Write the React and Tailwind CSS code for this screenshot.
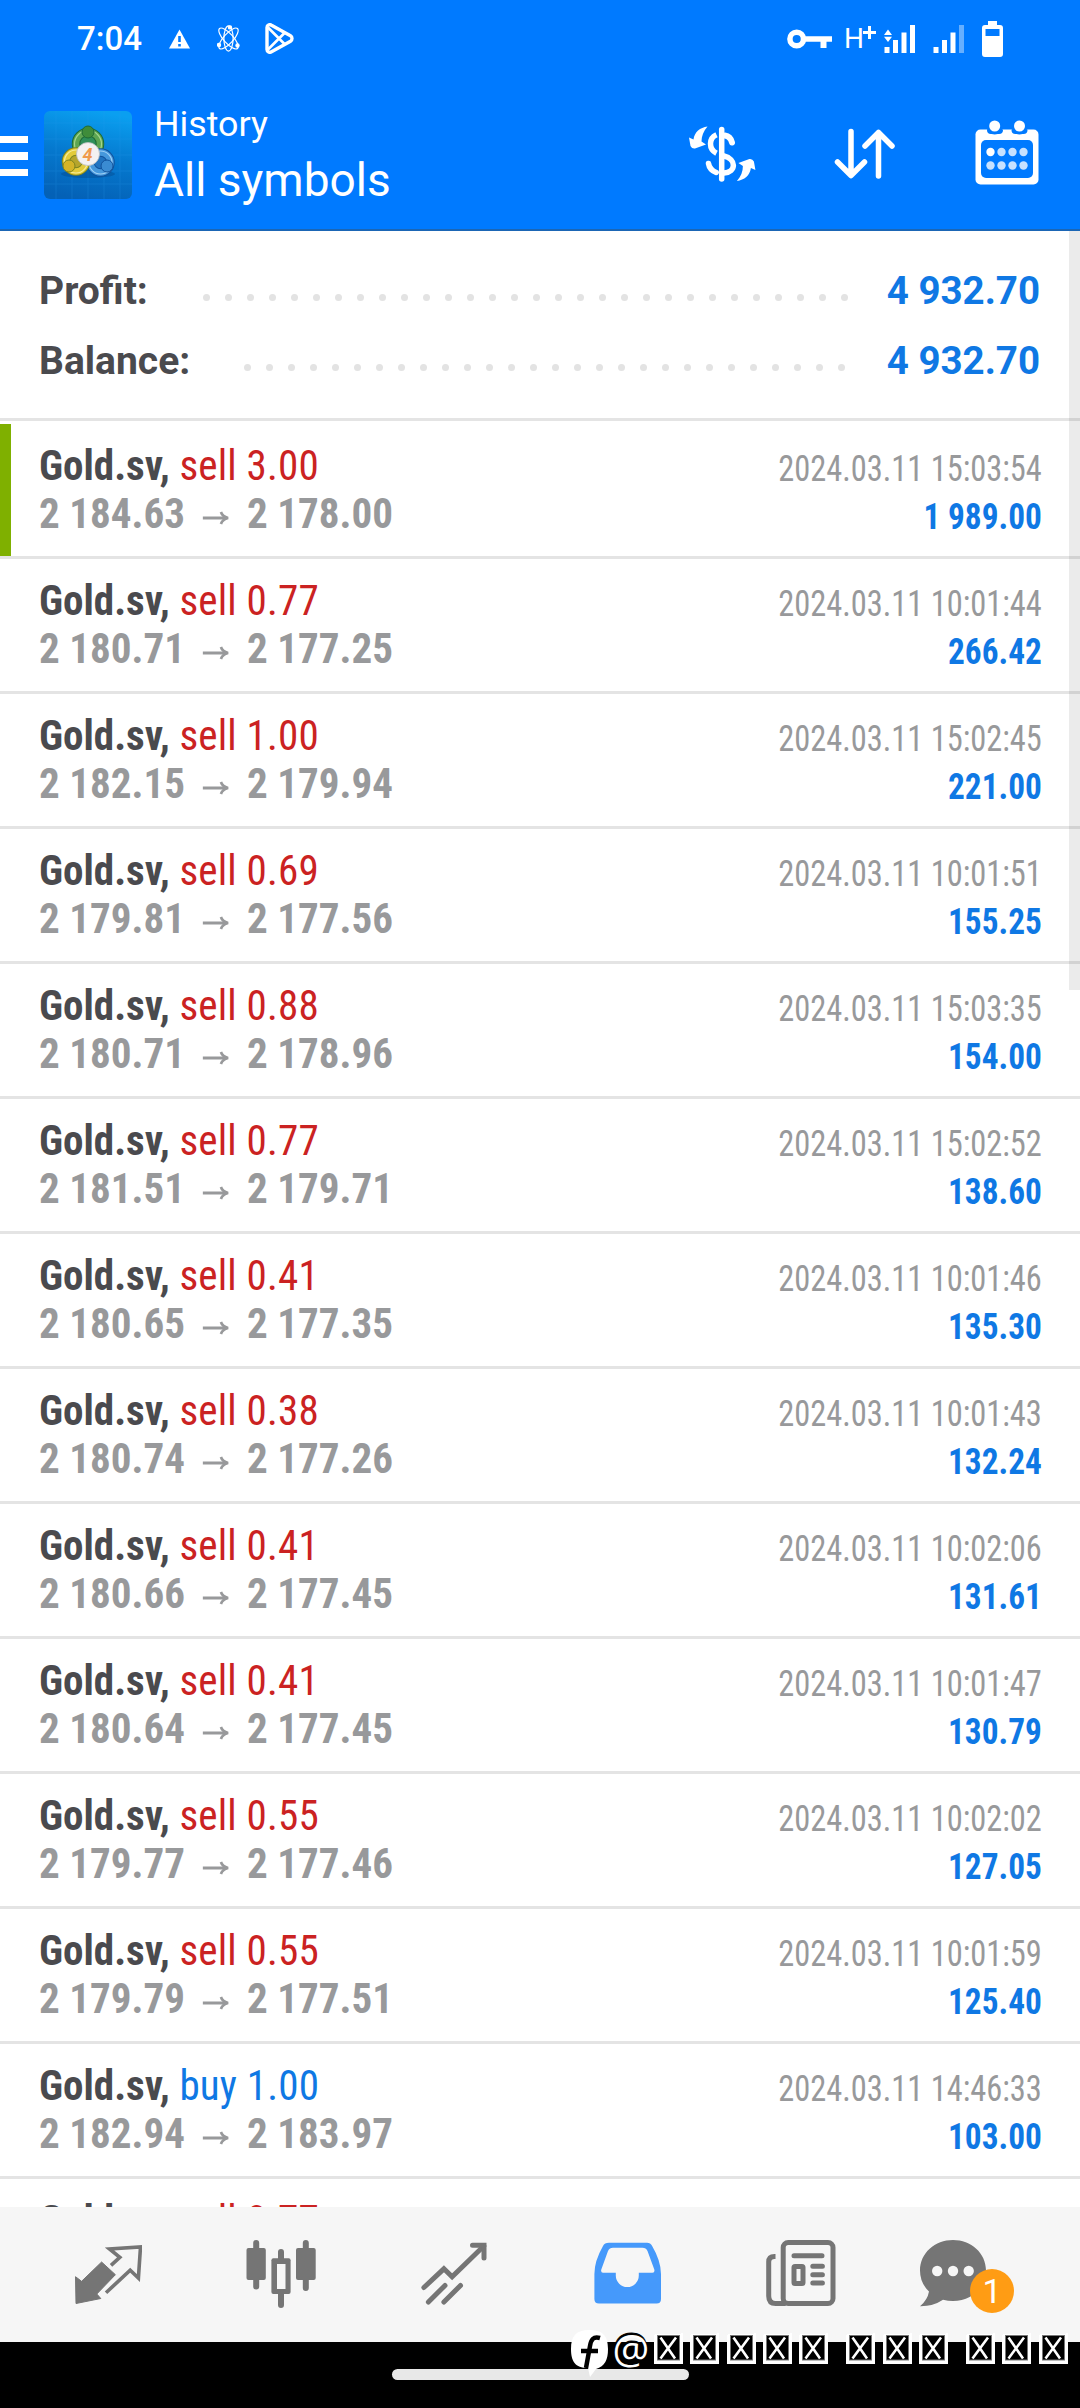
const deals = [
  { side: "sell", volume: "3.00", open: "2 184.63", close: "2 178.00", time: "2024.03.11 15:03:54", profit: "1 989.00", marked: true },
  { side: "sell", volume: "0.77", open: "2 180.71", close: "2 177.25", time: "2024.03.11 10:01:44", profit: "266.42" },
  { side: "sell", volume: "1.00", open: "2 182.15", close: "2 179.94", time: "2024.03.11 15:02:45", profit: "221.00" },
  { side: "sell", volume: "0.69", open: "2 179.81", close: "2 177.56", time: "2024.03.11 10:01:51", profit: "155.25" },
  { side: "sell", volume: "0.88", open: "2 180.71", close: "2 178.96", time: "2024.03.11 15:03:35", profit: "154.00" },
  { side: "sell", volume: "0.77", open: "2 181.51", close: "2 179.71", time: "2024.03.11 15:02:52", profit: "138.60" },
  { side: "sell", volume: "0.41", open: "2 180.65", close: "2 177.35", time: "2024.03.11 10:01:46", profit: "135.30" },
  { side: "sell", volume: "0.38", open: "2 180.74", close: "2 177.26", time: "2024.03.11 10:01:43", profit: "132.24" },
  { side: "sell", volume: "0.41", open: "2 180.66", close: "2 177.45", time: "2024.03.11 10:02:06", profit: "131.61" },
  { side: "sell", volume: "0.41", open: "2 180.64", close: "2 177.45", time: "2024.03.11 10:01:47", profit: "130.79" },
  { side: "sell", volume: "0.55", open: "2 179.77", close: "2 177.46", time: "2024.03.11 10:02:02", profit: "127.05" },
  { side: "sell", volume: "0.55", open: "2 179.79", close: "2 177.51", time: "2024.03.11 10:01:59", profit: "125.40" },
  { side: "buy", volume: "1.00", open: "2 182.94", close: "2 183.97", time: "2024.03.11 14:46:33", profit: "103.00" },
];

const StatusBar = () => (
  <div className="flex h-[77px] items-center justify-between pl-[77px] pr-[77px]">
    <div className="flex items-center">
      <span className="w-[92px] text-[33px] font-medium leading-[77px]">7:04</span>
      <svg className="mr-[27px]" width="21" height="20" viewBox="0 0 21 20">
        <path d="M10.5 0.5 21 19.5H0Z" fill="#fff" />
        <path d="M10.5 7v6M10.5 15v2.5" stroke="#007aff" strokeWidth="2.6" />
      </svg>
      <svg className="mr-[25px]" width="23" height="27" viewBox="0 0 23 27" fill="none" stroke="#fff" strokeWidth="1.2">
        <ellipse cx="11.5" cy="13.5" rx="4.6" ry="12.6" />
        <ellipse cx="11.5" cy="13.5" rx="4.8" ry="13.4" transform="rotate(42 11.5 13.5)" />
        <ellipse cx="11.5" cy="13.5" rx="4.8" ry="13.4" transform="rotate(-42 11.5 13.5)" />
        <circle cx="13" cy="2.4" r="1.6" fill="#fff" />
        <circle cx="2" cy="20" r="1.6" fill="#fff" />
        <circle cx="20.5" cy="20.5" r="1.6" fill="#fff" />
      </svg>
      <svg width="29" height="31" viewBox="0 0 29 31" fill="none" stroke="#fff" strokeLinejoin="round">
        <path d="M2 4.5C2 2 4.5 1 6.5 2.2L25.5 12.8c2 1.2 2 4.2 0 5.4L6.5 28.8C4.5 30 2 29 2 26.5Z" strokeWidth="3.4" />
        <path d="M3 4.5 19.5 21M3 26.5 19.5 10" strokeWidth="2.6" />
      </svg>
    </div>
    <div className="flex items-center">
      <svg className="mr-[12px]" width="45" height="20" viewBox="0 0 45 20">
        <circle cx="9.7" cy="10" r="6.8" fill="none" stroke="#fff" strokeWidth="5.5" />
        <path d="M18 7.2h27v5.6h-5.5V19h-6v-6.2H18Z" fill="#fff" />
      </svg>
      <span className="flex w-[40px] items-start text-[28px] leading-[34px]">
        H
        <svg className="mt-[4px] -ml-px" width="13" height="13" viewBox="0 0 13 13" stroke="#fff" strokeWidth="3">
          <path d="M6.5 0v13M0 6.5h13" />
        </svg>
      </span>
      <svg className="mr-[18px]" width="31" height="30" viewBox="0 0 31 30" fill="#fff">
        <path d="M4 5.5 8 11H0ZM4 18 8 12.8H0Z" />
        <path d="M0.5 23h5v6h-5ZM9 16h5v13H9ZM17.5 8.5h5V29h-5ZM26 1h5v28h-5Z" />
      </svg>
      <svg className="mr-[18px]" width="31" height="30" viewBox="0 0 31 30" fill="#fff">
        <path d="M0.5 23h5v6h-5ZM9 16h5v13H9ZM17.5 8.5h5V29h-5Z" />
        <path d="M26 1h5v28h-5Z" opacity="0.4" />
      </svg>
      <svg width="21" height="36" viewBox="0 0 21 36">
        <path d="M6 0h9v4h3a3 3 0 0 1 3 3v26a3 3 0 0 1-3 3H3a3 3 0 0 1-3-3V7a3 3 0 0 1 3-3h3Z" fill="#fff" />
        <path d="M3.5 8h14v7h-14Z" fill="#007aff" />
      </svg>
    </div>
  </div>
);

const AppLogo = () => (
  <svg className="ml-[16px] mt-[34px]" width="88" height="88" viewBox="0 0 88 88">
    <defs>
      <linearGradient id="logoBg" x1="0.6" y1="0" x2="0.4" y2="1">
        <stop offset="0" stopColor="#0a9ff0" />
        <stop offset="0.5" stopColor="#0579cf" />
        <stop offset="1" stopColor="#0461b6" />
      </linearGradient>
    </defs>
    <rect width="88" height="88" rx="6" fill="url(#logoBg)" />
    <path d="M12 0v88M28 0v88M44 0v88M60 0v88M76 0v88M0 12h88M0 28h88M0 44h88M0 60h88M0 73h88" stroke="#2b9df0" strokeWidth="1" opacity="0.22" />
    <ellipse cx="44" cy="63" rx="27" ry="4" fill="#034d93" opacity="0.5" />
    <circle cx="44" cy="33" r="12" fill="#2f8f5a" stroke="#1e6a35" strokeWidth="8.5" />
    <circle cx="44" cy="33" r="12" fill="none" stroke="#5da552" strokeWidth="6.5" />
    <circle cx="44" cy="33" r="13.5" fill="none" stroke="#a5d68c" strokeWidth="1.2" />
    <circle cx="56.5" cy="51.5" r="10" fill="#2173c0" stroke="#11529c" strokeWidth="8.5" />
    <circle cx="56.5" cy="51.5" r="10" fill="none" stroke="#4698dc" strokeWidth="6.5" />
    <circle cx="56.5" cy="51.5" r="11.5" fill="none" stroke="#9fd0f5" strokeWidth="1.2" />
    <circle cx="32" cy="50.5" r="10" fill="#b5a52c" stroke="#7d8420" strokeWidth="8.5" />
    <circle cx="32" cy="50.5" r="10" fill="none" stroke="#e3cb3a" strokeWidth="6.5" />
    <circle cx="32" cy="50.5" r="11.5" fill="none" stroke="#f7ec9a" strokeWidth="1.2" />
    <circle cx="44" cy="21" r="6" fill="#3f8c3a" stroke="#1e6a35" strokeWidth="1" />
    <circle cx="25" cy="55" r="6" fill="#d3b428" stroke="#7d8420" strokeWidth="1" />
    <circle cx="63" cy="55" r="6" fill="#3a8bd2" stroke="#11529c" strokeWidth="1" />
    <circle cx="44" cy="43" r="11.5" fill="#f4f1f1" stroke="#b9bdc0" strokeWidth="0.8" />
    <text x="43.5" y="49.5" textAnchor="middle" fontSize="18" fontWeight="700" fontStyle="italic" fill="#f09a4c">4</text>
  </svg>
);

const Header = () => (
  <header className="h-[231px] border-b-2 border-[#1b66b5] bg-[#007aff] font-[Roboto] text-white">
    <StatusBar />
    <div className="flex items-start">
      <div className="mt-[59px] flex w-[28px] flex-col gap-[9px]">
        <div className="h-[7px] bg-white" />
        <div className="h-[8px] bg-white" />
        <div className="h-[7px] bg-white" />
      </div>
      <AppLogo />
      <div className="ml-[22px] mt-[26px] flex-1">
        <div className="text-[35.8px] leading-[42px]">History</div>
        <div className="mt-[3px] text-[46px] leading-[64px]">All symbols</div>
      </div>
      <svg className="mt-[33px]" width="90" height="80" viewBox="0 0 90 80" fill="none" stroke="#fff" strokeWidth="5.5" strokeLinecap="round">
        <path d="M41.7 19.5v49.5" />
        <path d="M45 25.5c4 .5 6 3.2 7 7" strokeWidth="6" />
        <path d="M36.5 24.8c-8 3.5-8 14.5 0 18.5" strokeLinecap="butt" />
        <path d="M44 46c12.5 3 12.5 16 0 17" />
        <path d="M28.5 53.5c.8 5 4 7.5 7.7 9" />
        <g fill="#fff" stroke="none">
          <path d="M27.5 16.5C20 17.5 14.5 22 13.5 29.5L9 27.5 10.5 36Q12 39 15 38.5L26 34.5 21.5 31.5C21.5 26 23.5 21 27.5 16.5Z" />
          <path d="M27.5 16.5C20 17.5 14.5 22 13.5 29.5L9 27.5 10.5 36Q12 39 15 38.5L26 34.5 21.5 31.5C21.5 26 23.5 21 27.5 16.5Z" transform="rotate(180 42.2 43.8)" />
        </g>
      </svg>
      <svg className="ml-[64px] mt-[51px]" width="62" height="52" viewBox="0 0 62 52" fill="none" stroke="#fff" strokeWidth="5.5" strokeLinecap="round" strokeLinejoin="round">
        <path d="M17 3.5V47M3.5 34 17 47.5 30.5 34" />
        <path d="M44.5 48V4.5M31 18 44.5 4.5 58 18" />
      </svg>
      <svg className="ml-[79px] mr-[41px] mt-[43px]" width="64" height="65" viewBox="0 0 64 65">
        <rect x="0.5" y="9.5" width="63" height="55" rx="5" fill="#fff" />
        <path d="M12 9.5V10a4 4 0 0 0 4 4h8a4 4 0 0 0 4-4V9.5ZM36.5 9.5V10a4 4 0 0 0 4 4h8a4 4 0 0 0 4-4V9.5Z" fill="#007aff" />
        <circle cx="19.7" cy="6.5" r="8" fill="#007aff" />
        <circle cx="44.5" cy="6.5" r="8" fill="#007aff" />
        <circle cx="19.7" cy="6" r="5.5" fill="#fff" />
        <circle cx="44.5" cy="6" r="5.5" fill="#fff" />
        <rect x="6" y="20" width="52" height="38" rx="5" fill="#007aff" />
        <g fill="#fff">
          <circle cx="15.5" cy="32" r="4.2" />
          <g opacity="0.78">
            <circle cx="26.5" cy="32" r="4.2" />
            <circle cx="37.5" cy="32" r="4.2" />
            <circle cx="48.5" cy="32" r="4.2" />
            <circle cx="15.5" cy="45.5" r="4.2" />
            <circle cx="26.5" cy="45.5" r="4.2" />
            <circle cx="37.5" cy="45.5" r="4.2" />
            <circle cx="48.5" cy="45.5" r="4.2" />
          </g>
        </g>
      </svg>
    </div>
  </header>
);

const SummaryRow = ({ label, value, dots, labelClass }) => (
  <div className="flex h-[70px] items-center">
    <span className={`${labelClass} text-[39px] font-bold text-[#4a4a4e]`}>{label}</span>
    <span className="mt-[13px] flex gap-[15px]">
      {Array.from({ length: dots }, (_, i) => (
        <i key={i} className="size-[7px] rounded-full bg-[#e3e3e3]" />
      ))}
    </span>
    <span className="ml-auto text-[38.5px] font-bold text-[#0f78e4]">{value}</span>
  </div>
);

const DealRow = ({ side, volume, open, close, time, profit, marked }) => (
  <li className="flex h-[135px] shrink-0 border-b-3 border-[#e4e4e4] pr-[38px] font-['Roboto_Condensed',Roboto,sans-serif]">
    <div className={marked ? "w-[11px] bg-[#7fb000]" : "w-[11px]"} />
    <div className="ml-[28px] mt-[17px] flex-1 origin-left scale-x-[0.955] text-[43px] leading-[48px]">
      <div>
        <span className="font-bold text-[#4a4a4e]">{"Gold.sv, "}</span>
        <span className={side === "buy" ? "tracking-[0.2px] text-[#0f78e4]" : "tracking-[0.2px] text-[#cb2222]"}>
          {side} {volume}
        </span>
      </div>
      <div className="flex items-center font-bold text-[#98999b]">
        {open}
        <svg className="ml-[18px] mr-[18px] mt-[9px]" width="29" height="14" viewBox="0 0 28 14" fill="none" stroke="#98999b" strokeWidth="2.8">
          <path d="M0 7h25" />
          <path d="M19 1c1 3 3.5 5 7.5 6-4 1-6.5 3-7.5 6" />
        </svg>
        {close}
      </div>
    </div>
    <div className="mt-[21px] text-right text-[36px] leading-[48px]">
      <div className="origin-right scale-x-90 text-[#98999b]">{time}</div>
      <div className="origin-right scale-x-[0.925] font-bold text-[#0f78e4]">{profit}</div>
    </div>
  </li>
);

const TabBar = () => (
  <nav className="flex h-[135px] items-start bg-[#f6f6f6] pl-[75px] font-[Roboto] text-[#757575]">
    <svg className="mt-[38px]" width="67" height="60" viewBox="0 0 67 60">
      <path d="M0.5 31.7 6.6 36.3 26.6 17 40.4 29.7 21.8 49l4 4.5L1 58.5Z" fill="currentColor" stroke="currentColor" strokeLinejoin="round" />
      <path d="M36 20.3 44.8 12.3 34.5 4 65.5 2 63.4 33 55.2 25.3 31 47.7" fill="none" stroke="currentColor" strokeWidth="3.6" />
    </svg>
    <svg className="ml-[104px] mt-[33px]" width="70" height="68" viewBox="0 0 70 68" stroke="currentColor" strokeWidth="6" strokeLinecap="round">
      <path d="M10.2 3v43.5M35 12v9M35 54v11M59.8 3v45" />
      <g fill="currentColor" stroke="none">
        <rect x="0.5" y="8" width="19.3" height="32" rx="2" />
        <rect x="50" y="8" width="19.7" height="32" rx="2" />
        <rect x="25.4" y="18.3" width="19.2" height="35.7" rx="2" />
      </g>
      <rect x="31" y="24" width="8.5" height="25" fill="#f6f6f6" stroke="none" />
    </svg>
    <svg className="ml-[105px] mt-[35px]" width="67" height="64" viewBox="0 0 67 64" fill="none" stroke="currentColor" strokeWidth="5" strokeLinecap="round">
      <path d="M2.9 45.5 22.9 26.8 31.1 34.7 62.8 4" />
      <path d="M51.5 3.3H63V16" />
      <path d="M7.4 60 24 43.5M22.9 60 39.5 43.5" />
    </svg>
    <svg className="ml-[106px] mt-[35px]" width="68" height="62" viewBox="0 0 68 62">
      <path
        fillRule="evenodd"
        fill="#4599fb"
        d="M15 .7H53q3.5 0 5 3Q67 19 67 32V57q0 4.5-4.5 4.5H5Q.4 61.5.4 57V32Q.4 19 9 4 10.5.7 15 .7ZM19 5.7Q15.5 5.7 14 9L7.3 27.5Q6.5 30.7 9 30.7H21.8V33.5a11.5 11.5 0 0 0 23 0V30.7H58.5Q61 30.7 60.3 27.5L53.5 9Q52 5.7 48.5 5.7Z"
      />
    </svg>
    <svg className="ml-[104px] mt-[33px]" width="70" height="66" viewBox="0 0 70 66" fill="none" stroke="currentColor" strokeWidth="5">
      <rect x="17.2" y="2.5" width="49.8" height="61" rx="5" />
      <path d="M9.5 16.5h-1Q2.7 16.5 2.7 22v34q0 7.5 7 7.5h10" />
      <g strokeLinecap="round">
        <path d="M28 15.7h28M46.8 26.3h9.6M46.8 34.7h9.6M46.8 43h9.6" />
        <rect x="28" y="26.5" width="9" height="17" rx="1" />
      </g>
    </svg>
    <div className="relative ml-[84px] mt-[33px]">
      <svg width="66" height="67" viewBox="0 0 66 67">
        <path d="M33 0C51 0 66 13 66 30.5S51 61 33 61q-5 0-10-1.2Q13 66.5 0 66.3 7.5 60 9 51.5 0 43 0 30.5C0 13 15 0 33 0Z" fill="currentColor" />
        <g fill="#f6f6f6">
          <circle cx="17.2" cy="31" r="5.2" />
          <circle cx="33" cy="31" r="5.2" />
          <circle cx="48.7" cy="31" r="5.2" />
        </g>
      </svg>
      <span className="absolute left-[50px] top-[29px] flex size-[44px] items-center justify-center rounded-full bg-[#ff9c14] text-[34px] leading-none text-white">
        1
      </span>
    </div>
  </nav>
);

// left edge of every box, relative to the watermark
const boxes = [89, 125, 162, 198, 234, 281, 318, 354, 401, 437, 474];

const Watermark = () => (
  <svg className="absolute left-[566px] top-[2325px]" width="514" height="60" viewBox="0 0 514 60">
    <path d="M23 5C37 5 42 11 42 24 42 35 39 41 30 44L24 52 22 43C9 43 5 36 5 24 5 11 10 5 23 5Z" fill="#fff" />
    <path d="M34 13C27 11 25 15 24 21L20 43M15 26H32" stroke="#000" strokeWidth="4.5" fill="none" />
    <text x="46" y="37" fontSize="41" fontFamily="Open Sans" stroke="#000" strokeWidth="1">@</text>
    <text x="46.5" y="38.5" fontSize="41" fontFamily="Open Sans" fill="#fff">@</text>
    {boxes.map((x) => (
      <g key={x} transform={`translate(${x - 1} 8)`} fill="none">
        <rect x="1" y="1" width="27" height="29" fill="#fff" />
        <rect x="3.5" y="2.5" width="22" height="24.5" fill="#000" stroke="#777" strokeWidth="1" />
        <path d="M28 0V30H1V2" stroke="#fff" strokeWidth="2" />
        <path d="M6.5 4.5 21 25.5M22 4.5 6.5 25.5" stroke="#fff" strokeWidth="2.6" />
      </g>
    ))}
  </svg>
);

export default function App() {
  return (
    <div className="relative flex h-[2408px] w-[1080px] flex-col overflow-hidden bg-white">
      <Header />
      <section className="border-b-3 border-[#e4e4e4] pb-[22px] pl-[39px] pr-[40px] pt-[25px] font-[Roboto]">
        <SummaryRow label="Profit:" value="4 932.70" dots={30} labelClass="w-[164px]" />
        <SummaryRow label="Balance:" value="4 932.70" dots={28} labelClass="w-[205px]" />
      </section>
      <ul className="mt-[3px] flex h-[1783px] flex-col overflow-hidden">
        {deals.map((deal) => (
          <DealRow key={deal.time + deal.profit} {...deal} />
        ))}
        <DealRow side="sell" volume="0.77" />
      </ul>
      <TabBar />
      <footer className="flex h-[66px] justify-center bg-black pt-[27px]">
        <div className="h-[11px] w-[297px] rounded-full bg-[#e8e8e8]" />
      </footer>
      <div className="absolute right-0 top-[231px] h-[759px] w-[11px] bg-black/8" />
      <Watermark />
    </div>
  );
}
